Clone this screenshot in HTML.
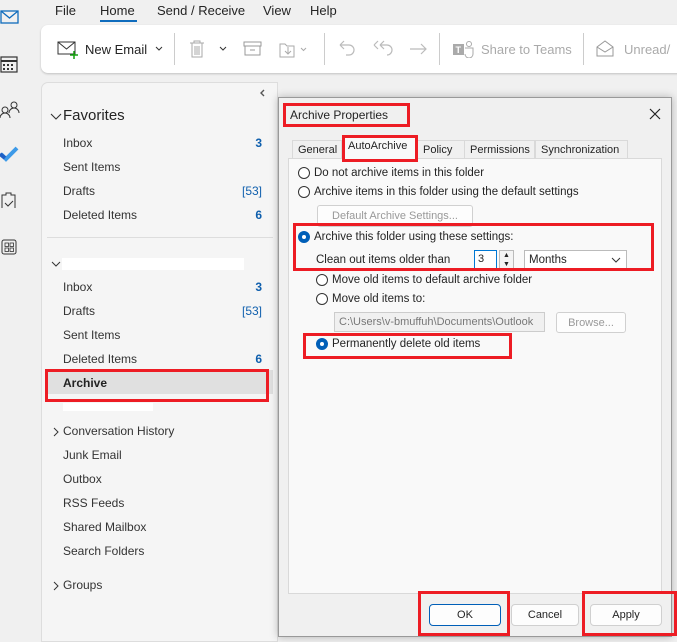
<!DOCTYPE html>
<html><head><meta charset="utf-8"><style>
*{box-sizing:border-box;margin:0;padding:0}
body{width:677px;height:633px;overflow:hidden;background:#f0f0f0;font-family:"Liberation Sans",sans-serif;font-size:12px;color:#242424;position:relative}
.a{position:absolute}
.red{position:absolute;border:3px solid #ed1c24}
.tab{position:absolute;top:140px;height:18px;border:1px solid #d9d9d9;border-bottom:none;background:#f0f0f0;font-size:11px;padding:3px 5px 0;white-space:nowrap}
.radio{position:absolute;width:12px;height:12px;border:1px solid #333;border-radius:50%;background:#fff}
.radio.on{border:1px solid #005fb8;background:#005fb8}
.radio.on::after{content:"";position:absolute;left:3px;top:3px;width:4px;height:4px;border-radius:50%;background:#fff}
.lbl{position:absolute;font-size:11.5px;white-space:nowrap}
.btn{position:absolute;height:22px;border:1px solid #d0d0d0;border-radius:4px;background:#fdfdfd;font-size:11px;text-align:center;line-height:20px}
.fl{position:absolute;left:63px;font-size:12px;color:#333}
.cnt{position:absolute;left:230px;width:32px;text-align:right;font-size:12px;color:#0f5fad;font-weight:bold}
.chev{position:absolute}
</style></head><body>
<!-- left rail -->
<svg class="a" style="left:0;top:8px" width="22" height="200" viewBox="0 0 22 200">
<rect x="1" y="3" width="17" height="12" fill="none" stroke="#0f6cbd" stroke-width="1.3"/><path d="M1 3 L9.5 10 L18 3" fill="none" stroke="#0f6cbd" stroke-width="1.3"/>
<rect x="1" y="49" width="16" height="15" fill="none" stroke="#333" stroke-width="1.2"/><line x1="1" y1="53" x2="17" y2="53" stroke="#333" stroke-width="2"/>
<g fill="#333"><rect x="3" y="56" width="2" height="2"/><rect x="7" y="56" width="2" height="2"/><rect x="11" y="56" width="2" height="2"/><rect x="3" y="60" width="2" height="2"/><rect x="7" y="60" width="2" height="2"/><rect x="11" y="60" width="2" height="2"/></g>
<circle cx="5" cy="102" r="3" fill="none" stroke="#333"/><path d="M0 110 a5 5 0 0 1 10 0" fill="none" stroke="#333"/>
<circle cx="14" cy="97" r="3" fill="none" stroke="#333"/><path d="M9 105 a5 5 0 0 1 10 0" fill="none" stroke="#333"/>
<path d="M1 146 L6 151 L17 140" fill="none" stroke="#3d9ae8" stroke-width="4"/><path d="M0 146 L5 150" stroke="#1e5fc5" stroke-width="4"/>
<path d="M2 187 h4 v-2 h5 v2 h4 v15 h-13 z" fill="none" stroke="#333"/><path d="M5 195 l3 3 l5 -5" fill="none" stroke="#333"/>
</svg>
<svg class="a" style="left:0;top:238px" width="20" height="20"><rect x="2" y="2" width="14" height="14" rx="2" fill="none" stroke="#333"/><rect x="5" y="5" width="3.5" height="3.5" fill="none" stroke="#333" stroke-width=".8"/><rect x="10" y="5" width="3.5" height="3.5" fill="none" stroke="#333" stroke-width=".8"/><rect x="5" y="10" width="3.5" height="3.5" fill="none" stroke="#333" stroke-width=".8"/><rect x="10" y="10" width="3.5" height="3.5" fill="none" stroke="#333" stroke-width=".8"/></svg>
<!-- menu -->
<div class="a" style="left:55px;top:3px;font-size:13px">File</div>
<div class="a" style="left:100px;top:3px;font-size:13px">Home</div>
<div class="a" style="left:100px;top:20px;width:37px;height:2px;background:#0f6cbd"></div>
<div class="a" style="left:157px;top:3px;font-size:13px">Send / Receive</div>
<div class="a" style="left:263px;top:3px;font-size:13px">View</div>
<div class="a" style="left:310px;top:3px;font-size:13px">Help</div>
<!-- ribbon -->
<div class="a" style="left:41px;top:25px;width:650px;height:48px;background:#fff;border-radius:7px;box-shadow:0 1px 2px rgba(0,0,0,.2)"></div>
<svg class="a" style="left:57px;top:40px" width="24" height="20"><rect x="1" y="2" width="17" height="12" fill="none" stroke="#333"/><path d="M1 2 L9.5 9 L18 2" fill="none" stroke="#333"/><path d="M17 11 v8 M13 15 h8" stroke="#13a10e" stroke-width="1.5"/></svg>
<div class="a" style="left:85px;top:42px;font-size:13px">New Email</div>
<svg class="chev" style="left:155px;top:46px" width="8" height="6"><path d="M1 1 l3 3 l3 -3" fill="none" stroke="#333"/></svg>
<div class="a" style="left:174px;top:33px;width:1px;height:32px;background:#ccc"></div>
<svg class="a" style="left:188px;top:39px" width="18" height="20"><path d="M2 4 h14 M6 4 v-2 h6 v2 M4 4 v14 h10 v-14 M7 7 v9 M9 7 v9 M11 7 v9" fill="none" stroke="#aaa"/></svg>
<svg class="chev" style="left:219px;top:46px" width="8" height="6"><path d="M1 1 l3 3 l3 -3" fill="none" stroke="#333"/></svg>
<svg class="a" style="left:243px;top:41px" width="20" height="16"><rect x="1" y="1" width="17" height="4" fill="none" stroke="#999"/><path d="M2 5 v9 h15 v-9 M7 9 h5" fill="none" stroke="#999"/></svg>
<svg class="a" style="left:279px;top:40px" width="30" height="18"><path d="M1 4 h5 l2 2 h7 v11 h-14 z M9 7 v7 M6 11 l3 3 l3 -3" fill="none" stroke="#aaa"/><path d="M22 8 l2.5 2.5 l2.5 -2.5" fill="none" stroke="#aaa"/></svg>
<div class="a" style="left:324px;top:33px;width:1px;height:32px;background:#ccc"></div>
<svg class="a" style="left:338px;top:40px" width="100" height="18"><g fill="none" stroke="#bbb" stroke-width="1.2"><path d="M2 5 h9 a5 5 0 0 1 0 10 h-3 M2 5 l4 -4 M2 5 l4 4"/><path d="M42 5 h7 a5 5 0 0 1 0 10 M42 5 l4 -4 M42 5 l4 4 M36 5 l4 -4 M36 5 l4 4"/><path d="M72 9 h16 M83 4 l5 5 l-5 5"/></g></svg>
<div class="a" style="left:439px;top:33px;width:1px;height:32px;background:#ccc"></div>
<svg class="a" style="left:452px;top:40px" width="24" height="18"><rect x="1" y="4" width="11" height="11" fill="#aaa"/><text x="3.5" y="13" font-size="9" fill="#fff" font-family="Liberation Sans" font-weight="bold">T</text><circle cx="17" cy="4" r="2.5" fill="none" stroke="#aaa"/><path d="M13 8 h8 v6 a4 4 0 0 1 -8 0" fill="none" stroke="#aaa"/></svg>
<div class="a" style="left:481px;top:42px;font-size:13px;color:#aaa">Share to Teams</div>
<div class="a" style="left:583px;top:33px;width:1px;height:32px;background:#ccc"></div>
<svg class="a" style="left:596px;top:40px" width="20" height="18"><path d="M1 7 l8 -6 l8 6 v9 h-16 z M1 7 l8 5 l8 -5" fill="none" stroke="#999"/></svg>
<div class="a" style="left:624px;top:42px;font-size:13px;color:#aaa">Unread/</div>
<!-- folder pane -->
<div class="a" style="left:41px;top:82px;width:237px;height:560px;background:#f5f5f5;border:1px solid #ddd;border-radius:7px 0 0 0"></div>
<svg class="chev" style="left:259px;top:89px" width="6" height="8"><path d="M5 1 l-3 3 l3 3" fill="none" stroke="#555" stroke-width="1.4"/></svg>
<svg class="chev" style="left:50px;top:113px" width="12" height="8"><path d="M1 1 l5 5 l5 -5" fill="none" stroke="#333" stroke-width="1.1"/></svg>
<div class="a" style="left:63px;top:107px;font-size:15px">Favorites</div>
<div class="fl" style="top:136px">Inbox</div><div class="cnt" style="top:136px">3</div>
<div class="fl" style="top:160px">Sent Items</div>
<div class="fl" style="top:184px">Drafts</div><div class="cnt" style="top:184px;font-weight:normal">[53]</div>
<div class="fl" style="top:208px">Deleted Items</div><div class="cnt" style="top:208px">6</div>
<div class="a" style="left:47px;top:237px;width:226px;height:1px;background:#ddd"></div>
<svg class="chev" style="left:51px;top:261px" width="10" height="7"><path d="M1 1 l4 4 l4 -4" fill="none" stroke="#333"/></svg>
<div class="a" style="left:62px;top:258px;width:182px;height:12px;background:#fff"></div>
<div class="fl" style="top:280px">Inbox</div><div class="cnt" style="top:280px">3</div>
<div class="fl" style="top:304px">Drafts</div><div class="cnt" style="top:304px;font-weight:normal">[53]</div>
<div class="fl" style="top:328px">Sent Items</div>
<div class="fl" style="top:352px">Deleted Items</div><div class="cnt" style="top:352px">6</div>
<div class="a" style="left:47px;top:370px;width:226px;height:24px;background:#e0e0e0"></div>
<div class="fl" style="top:376px;font-weight:bold;color:#222">Archive</div>
<div class="red" style="left:45px;top:369px;width:224px;height:33px"></div>
<div class="a" style="left:63px;top:403px;width:90px;height:8px;background:#fff"></div>
<svg class="chev" style="left:53px;top:427px" width="6" height="10"><path d="M1 1 l4 4 l-4 4" fill="none" stroke="#333"/></svg>
<div class="fl" style="top:424px">Conversation History</div>
<div class="fl" style="top:448px">Junk Email</div>
<div class="fl" style="top:472px">Outbox</div>
<div class="fl" style="top:496px">RSS Feeds</div>
<div class="fl" style="top:520px">Shared Mailbox</div>
<div class="fl" style="top:544px">Search Folders</div>
<svg class="chev" style="left:53px;top:581px" width="6" height="10"><path d="M1 1 l4 4 l-4 4" fill="none" stroke="#333"/></svg>
<div class="fl" style="top:578px">Groups</div>
<!-- dialog -->
<div class="a" style="left:278px;top:97px;width:394px;height:540px;background:#f0f0f0;border:1px solid #999;box-shadow:0 0 8px rgba(0,0,0,.25)"></div>
<div class="a" style="left:290px;top:108px;font-size:12px">Archive Properties</div>
<div class="red" style="left:283px;top:103px;width:127px;height:24px"></div>
<svg class="a" style="left:649px;top:108px" width="12" height="12"><path d="M1 1 L11 11 M11 1 L1 11" stroke="#222" stroke-width="1.2"/></svg>
<div class="a" style="left:288px;top:158px;width:374px;height:436px;background:#f9f9f9;border:1px solid #d9d9d9"></div>
<div class="tab" style="left:292px;width:50px">General</div>
<div class="tab" style="left:342px;top:136px;height:23px;width:75px;background:#f9f9f9">AutoArchive</div>
<div class="tab" style="left:417px;width:48px">Policy</div>
<div class="tab" style="left:464px;width:71px">Permissions</div>
<div class="tab" style="left:535px;width:93px">Synchronization</div>
<div class="red" style="left:342px;top:135px;width:76px;height:27px"></div>
<div class="radio" style="left:298px;top:167px"></div><div class="lbl" style="left:314px;top:167px">Do not archive items in this folder</div>
<div class="radio" style="left:298px;top:186px"></div><div class="lbl" style="left:314px;top:186px">Archive items in this folder using the default settings</div>
<div class="btn" style="left:317px;top:205px;width:156px;color:#999;border-radius:3px">Default Archive Settings...</div>
<div class="radio on" style="left:298px;top:231px"></div><div class="lbl" style="left:314px;top:231px">Archive this folder using these settings:</div>
<div class="lbl" style="left:316px;top:254px">Clean out items older than</div>
<div class="a" style="left:474px;top:250px;width:23px;height:19px;background:#fff;border:1px solid #0078d4;font-size:11px;padding:2px 3px">3</div>
<div class="a" style="left:499px;top:250px;width:15px;height:19px;border:1px solid #bbb;background:#f4f4f4;font-size:7px;text-align:center;line-height:9px">&#9650;<br>&#9660;</div>
<div class="a" style="left:524px;top:250px;width:103px;height:20px;border:1px solid #bbb;background:#fff;font-size:11.5px;padding:3px 4px">Months</div>
<svg class="chev" style="left:611px;top:257px" width="10" height="6"><path d="M1 1 l4 4 l4 -4" fill="none" stroke="#333"/></svg>
<div class="red" style="left:293px;top:223px;width:361px;height:48px"></div>
<div class="radio" style="left:316px;top:274px"></div><div class="lbl" style="left:332px;top:274px">Move old items to default archive folder</div>
<div class="radio" style="left:316px;top:293px"></div><div class="lbl" style="left:332px;top:293px">Move old items to:</div>
<div class="a" style="left:334px;top:312px;width:211px;height:20px;background:#f0f0f0;border:1px solid #ccc;font-size:11px;color:#777;padding:3px 4px;overflow:hidden;white-space:nowrap">C:\Users\v-bmuffuh\Documents\Outlook</div>
<div class="btn" style="left:556px;top:312px;width:70px;height:21px;color:#999;border-radius:3px">Browse...</div>
<div class="radio on" style="left:316px;top:338px"></div><div class="lbl" style="left:332px;top:338px">Permanently delete old items</div>
<div class="red" style="left:303px;top:333px;width:209px;height:26px"></div>
<div class="btn" style="left:429px;top:604px;width:72px;border:1px solid #005fb8">OK</div>
<div class="btn" style="left:511px;top:604px;width:68px">Cancel</div>
<div class="btn" style="left:590px;top:604px;width:72px">Apply</div>
<div class="red" style="left:418px;top:591px;width:92px;height:45px"></div>
<div class="red" style="left:582px;top:591px;width:95px;height:45px"></div>
</body></html>
